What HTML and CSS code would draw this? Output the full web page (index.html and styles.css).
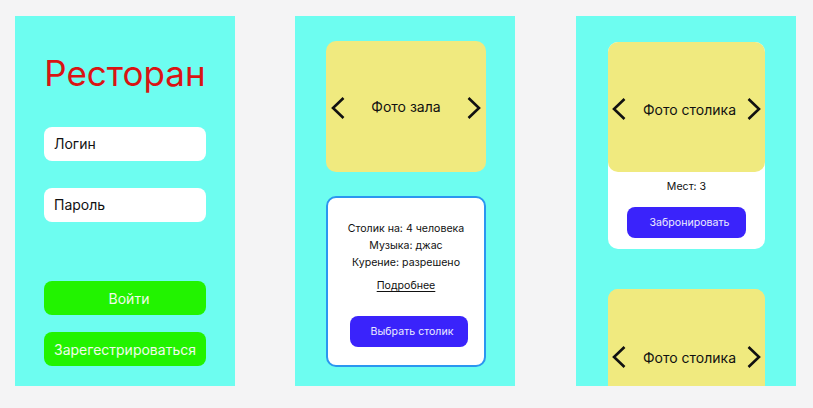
FILE: index.html
```html
<!DOCTYPE html>
<html lang="ru">
<head>
    <meta charset="UTF-8">
    <meta name="viewport" content="width=device-width, initial-scale=1.0">
    <title>Ресторан</title>
    <link rel="stylesheet" href="styles.css">
</head>
<body>

    <div class="screens">
        <!-- экран входа -->
        <section class="screen login">
            <h1 class="title">Ресторан</h1>
            <div class="field">Логин</div>
            <div class="field field-second">Пароль</div>
            <button class="btn-green btn-enter">Войти</button>
            <button class="btn-green btn-register">Зарегестрироваться</button>
        </section>

        <!-- экран зала -->
        <section class="screen hall">
            <div class="photo">
                <svg class="arrow" viewBox="0 0 14 22"><path d="M12.5 1 L2 11 L12.5 21"/></svg>
                <span>Фото зала</span>
                <svg class="arrow" viewBox="0 0 14 22"><path d="M1.5 1 L12 11 L1.5 21"/></svg>
            </div>
            <div class="info-card">
                <p>Столик на: 4 человека</p>
                <p>Музыка: джас</p>
                <p>Курение: разрешено</p>
                <a class="more" href="#">Подробнее</a>
                <button class="btn-blue btn-choose">Выбрать столик</button>
            </div>
        </section>

        <!-- экран столиков -->
        <section class="screen tables">
            <div class="table-card">
                <div class="photo">
                    <svg class="arrow" viewBox="0 0 14 22"><path d="M12.5 1 L2 11 L12.5 21"/></svg>
                    <span>Фото столика</span>
                    <svg class="arrow" viewBox="0 0 14 22"><path d="M1.5 1 L12 11 L1.5 21"/></svg>
                </div>
                <p class="seats">Мест: 3</p>
                <button class="btn-blue btn-book">Забронировать</button>
            </div>
            <div class="table-card next">
                <div class="photo">
                    <svg class="arrow" viewBox="0 0 14 22"><path d="M12.5 1 L2 11 L12.5 21"/></svg>
                    <span>Фото столика</span>
                    <svg class="arrow" viewBox="0 0 14 22"><path d="M1.5 1 L12 11 L1.5 21"/></svg>
                </div>
            </div>
        </section>
    </div>

</body>
</html>
```

FILE: styles.css
```css
* {
    box-sizing: border-box;
    margin: 0;
    padding: 0;
}

body {
    font-family: 'Inter', 'Noto Sans', sans-serif;
    background: #f4f4f5;
    color: #111;
    width: 813px;
    height: 408px;
    overflow: hidden;
}

.screens {
    display: flex;
    padding: 16px 0 0 15px;
}

.screen {
    width: 220px;
    height: 370px;
    background: #6dfdf0;
    overflow: hidden;
    display: flex;
    flex-direction: column;
}

.hall {
    margin-left: 60px;
    padding: 25px 29px 0 31px;
}

.tables {
    margin-left: 61px;
    padding: 26px 31px 0 32px;
}

/* вход */
.login {
    padding: 35px 29px 0;
}

.title {
    font-size: 35px;
    font-weight: 400;
    line-height: 44px;
    color: #d91414;
    text-align: center;
    margin-bottom: 32px;
}

.field {
    height: 34px;
    background: white;
    border-radius: 8px;
    padding-left: 10px;
    font-size: 14px;
    line-height: 34px;
    color: #111;
}

.field-second {
    margin-top: 27px;
}

.btn-green {
    height: 34px;
    border: none;
    border-radius: 8px;
    background: #22f300;
    color: #f1fbe9;
    font-family: inherit;
    font-size: 14px;
    padding-left: 8px;
    margin-top: 17px;
}

.btn-enter {
    margin-top: 59px;
}

.btn-register {
    padding-left: 0;
}

/* фото с листалками */
.photo {
    height: 131px;
    background: #f0ea7f;
    border-radius: 10px;
    display: flex;
    align-items: center;
    justify-content: space-between;
    padding: 0 5px;
    font-size: 14px;
}

.arrow {
    width: 14px;
    height: 22px;
    margin-top: 3px;
    fill: none;
    stroke: #111;
    stroke-width: 2.6;
}

.btn-blue {
    height: 31px;
    border: none;
    border-radius: 8px;
    background: #3a23fb;
    color: #ecebff;
    font-family: inherit;
    font-size: 10.6px;
    padding-left: 6px;
}

/* карточка столика в зале */
.info-card {
    margin-top: 24px;
    height: 171px;
    border: 2px solid #2b96f0;
    border-radius: 10px;
    background: white;
    padding: 22px 16px 0;
    display: flex;
    flex-direction: column;
    align-items: center;
    font-size: 10.6px;
    line-height: 17px;
}

.more {
    margin-top: 6px;
    color: #111;
    text-decoration: underline;
    text-underline-offset: 2px;
}

.btn-choose {
    width: 118px;
    margin-top: 22px;
    margin-left: 6px;
}

/* список столиков */
.table-card {
    background: white;
    border-radius: 10px;
    display: flex;
    flex-direction: column;
    align-items: center;
    padding-bottom: 11px;
    flex-shrink: 0;
}

.table-card .photo {
    width: 100%;
    height: 130px;
    padding: 0 4px;
}

.table-card .photo span {
    margin-top: 4px;
    margin-left: 6px;
}

.seats {
    font-size: 10.6px;
    line-height: 17px;
    margin-top: 6px;
}

.btn-book {
    width: 119px;
    margin-top: 12px;
}

.table-card.next {
    margin-top: 40px;
    background: #f0ea7f;
    padding-bottom: 0;
}

.table-card.next .photo {
    padding-top: 3px;
}
```
